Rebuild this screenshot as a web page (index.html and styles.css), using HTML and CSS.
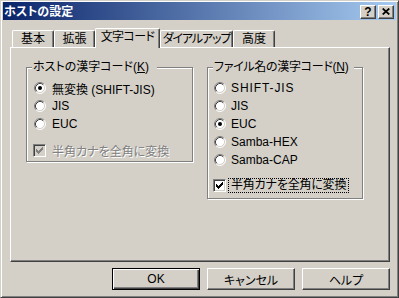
FILE: index.html
```html
<!DOCTYPE html>
<html lang="ja">
<head>
<meta charset="utf-8">
<title>ホストの設定</title>
<link rel="stylesheet" href="styles.css">
</head>
<body>
<svg class="defs" width="0" height="0" aria-hidden="true">
  <symbol id="radio" viewBox="0 0 12 12">
    <circle cx="6" cy="6" r="5" fill="#fff"/>
    <path d="M2.11 9.89A5.5 5.5 0 0 1 9.89 2.11" stroke="#808080" fill="none"/>
    <path d="M9.89 2.11A5.5 5.5 0 0 1 2.11 9.89" stroke="#fff" fill="none"/>
    <path d="M2.82 9.18A4.5 4.5 0 0 1 9.18 2.82" stroke="#404040" fill="none"/>
    <path d="M9.18 2.82A4.5 4.5 0 0 1 2.82 9.18" stroke="#d4d0c8" fill="none"/>
  </symbol>
  <symbol id="check" viewBox="0 0 7 7">
    <path d="M0 2h1v3H0zM1 3h1v3H1zM2 4h1v3H2zM3 3h1v3H3zM4 2h1v3H4zM5 1h1v3H5zM6 0h1v3H6z"/>
  </symbol>
</svg>
<div class="window">
  <div class="titlebar">
    <span class="title">ホストの設定</span>
    <div class="tbtns">
      <span class="tbtn help">?</span>
      <span class="tbtn close"><svg width="8" height="7" viewBox="0 0 8 7"><path d="M0.7 0.5L7.3 6.5M7.3 0.5L0.7 6.5" stroke="#000" stroke-width="1.7"/></svg></span>
    </div>
  </div>
  <div class="body">
    <div class="tabs">
      <div class="tab w1">基本</div>
      <div class="tab w2">拡張</div>
      <div class="tab sel">文字コード</div>
      <div class="tab w4">ダイアルアップ</div>
      <div class="tab w5">高度</div>
    </div>
    <div class="panel">
      <div class="group gl">
        <div class="legend">ホストの漢字コード(<u>K</u>)</div>
        <div class="opts">
          <div class="row"><svg class="rb"><use href="#radio"/><circle cx="6" cy="6" r="2" fill="#000"/></svg><span>無変換 (SHIFT-JIS)</span></div>
          <div class="row"><svg class="rb"><use href="#radio"/></svg><span>JIS</span></div>
          <div class="row"><svg class="rb"><use href="#radio"/></svg><span>EUC</span></div>
          <div class="row cbrow disabled"><span class="cb"><svg class="ck"><use href="#check"/></svg></span><span class="dis">半角カナを全角に変換</span></div>
        </div>
      </div>
      <div class="group gr">
        <div class="legend">ファイル名の漢字コード(<u>N</u>)</div>
        <div class="opts">
          <div class="row"><svg class="rb"><use href="#radio"/></svg><span class="wide">SHIFT-JIS</span></div>
          <div class="row"><svg class="rb"><use href="#radio"/></svg><span>JIS</span></div>
          <div class="row"><svg class="rb"><use href="#radio"/><circle cx="6" cy="6" r="2" fill="#000"/></svg><span>EUC</span></div>
          <div class="row"><svg class="rb"><use href="#radio"/></svg><span>Samba-HEX</span></div>
          <div class="row"><svg class="rb"><use href="#radio"/></svg><span>Samba-CAP</span></div>
          <div class="row cbrow"><span class="cb"><svg class="ck"><use href="#check"/></svg></span><span class="focus">半角カナを全角に変換</span></div>
        </div>
      </div>
    </div>
    <div class="buttons">
      <div class="btn default">OK</div>
      <div class="btn">キャンセル</div>
      <div class="btn">ヘルプ</div>
    </div>
  </div>
</div>
</body>
</html>
```
FILE: styles.css
```css
* { box-sizing: border-box; }
html, body { margin: 0; padding: 0; background: #d4d0c8; }
body {
  font-family: "Liberation Sans", "Noto Sans CJK JP", sans-serif;
  font-size: 12px;
  font-feature-settings: "palt";
  color: #000;
}
.defs { position: absolute; width: 0; height: 0; overflow: hidden; }

.window {
  width: 399px;
  height: 298px;
  border: 1px solid;
  border-color: #d4d0c8 #404040 #404040 #d4d0c8;
  box-shadow: inset 1px 1px #fff, inset -1px -1px #808080;
  padding: 1px 2px 2px 2px;
  background: #d4d0c8;
}

.titlebar {
  height: 18px;
  display: flex;
  align-items: flex-start;
  background: linear-gradient(to right, #0a246a, #a6caf0);
}
.title {
  color: #fff;
  font-weight: bold;
  line-height: 16px;
  padding: 2px 0 0 1px;
}
.tbtns {
  margin-left: auto;
  display: flex;
  gap: 2px;
  padding: 3px 2px 0 0;
}
.tbtn {
  width: 16px;
  height: 14px;
  background: #d4d0c8;
  border: 1px solid;
  border-color: #fff #404040 #404040 #fff;
  box-shadow: inset -1px -1px #808080;
  display: flex;
  align-items: center;
  justify-content: center;
}
.help {
  font-weight: bold;
  font-size: 12px;
  line-height: 12px;
  padding-bottom: 1px;
}
.close svg { display: block; margin-bottom: 1px; }

.body { padding-top: 8px; }

.tabs {
  display: flex;
  align-items: flex-end;
  height: 19px;
  padding-left: 9px;
}
.tab {
  height: 17px;
  border: 1px solid;
  border-color: #fff #404040 transparent #fff;
  border-bottom: none;
  border-radius: 2px 2px 0 0;
  box-shadow: inset -1px 0 #808080;
  background: #d4d0c8;
  text-align: center;
  line-height: 16px;
  white-space: nowrap;
  overflow: hidden;
}
.w1 { width: 42px; }
.w2 { width: 41px; }
.w4 { width: 73px; letter-spacing: -1.1px; }
.w5 { width: 42px; }
.tab.sel {
  width: 65px;
  height: 20px;
  margin-bottom: -1px;
  line-height: 17px;
  letter-spacing: -0.6px;
  position: relative;
  z-index: 1;
}

.panel {
  width: 380px;
  height: 215px;
  margin-left: 7px;
  border: 1px solid;
  border-color: #fff #404040 #404040 #fff;
  box-shadow: inset -1px -1px #808080;
  display: flex;
  align-items: flex-start;
  gap: 14px;
  padding: 19px 0 0 15px;
}

.group {
  border: 1px solid #808080;
  box-shadow: inset 1px 1px #fff, 1px 1px #fff;
}
.gl { width: 167px; height: 95px; padding-left: 7px; }
.gr { width: 156px; height: 132px; padding-left: 6px; }

.legend {
  width: fit-content;
  margin: -8px 0 0 -2px;
  padding: 0 8px 0 1px;
  background: #d4d0c8;
  line-height: 14px;
  white-space: nowrap;
}
.gr .legend { margin-left: -1px; padding-right: 6px; letter-spacing: -0.3px; }
.legend u { text-decoration: underline; text-underline-offset: 1px; }

.opts { margin-top: 5px; }
.row {
  height: 18px;
  display: flex;
  align-items: center;
  gap: 6px;
  white-space: nowrap;
}
.gr .row { gap: 5px; }
.rb { width: 12px; height: 12px; flex: none; display: block; }
.wide { letter-spacing: 0.9px; }

.cbrow { margin-top: 8px; }
.gr .cbrow { margin-top: 7px; gap: 2px; }
.cb {
  width: 13px;
  height: 13px;
  flex: none;
  margin-left: -1px;
  border: 1px solid;
  border-color: #808080 #fff #fff #808080;
  box-shadow: inset 1px 1px #404040, inset -1px -1px #d4d0c8;
  background: #fff;
  display: flex;
  align-items: center;
  justify-content: center;
}
.ck { width: 7px; height: 7px; display: block; fill: #000; shape-rendering: crispEdges; }
.disabled .cb { background: #d4d0c8; }
.disabled .ck { fill: #808080; }
.dis { color: #808080; text-shadow: 1px 1px #fff; }
.focus {
  border: 1px dotted #000;
  padding: 0 2px;
  line-height: 13px;
  letter-spacing: -0.2px;
}

.buttons {
  width: 387px;
  margin-top: 6px;
  display: flex;
  justify-content: flex-end;
  gap: 7px;
}
.btn {
  width: 88px;
  height: 22px;
  border: 1px solid;
  border-color: #fff #404040 #404040 #fff;
  box-shadow: inset -1px -1px #808080;
  background: #d4d0c8;
  display: flex;
  align-items: center;
  justify-content: center;
  white-space: nowrap;
}
.btn.default {
  border-color: #000;
  box-shadow: inset 1px 1px #fff, inset -1px -1px #404040, inset -2px -2px #808080;
}
```
